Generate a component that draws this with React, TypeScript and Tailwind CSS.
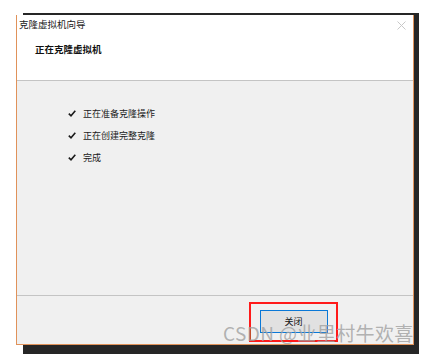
import React from 'react'

const steps = ['正在准备克隆操作', '正在创建完整克隆', '完成']

function Check() {
  return (
    <svg width="8" height="7" viewBox="0 0 8 7" className="shrink-0">
      <path d="M0.8 3.6 L3 5.8 L7.3 0.8" fill="none" stroke="#1a1a1a" strokeWidth="1.6" />
    </svg>
  )
}

export default function App() {
  const font = { fontFamily: '"Noto Sans CJK SC", "Noto Sans", sans-serif' }
  return (
    <div className="relative w-[431px] h-[354px] bg-white overflow-hidden" style={font}>
      {/* dark window shadow behind the dialog */}
      <div className="absolute left-[23px] top-[13px] w-[396px] h-[341px] bg-[#262626]" />

      <div className="relative pl-[16px] pt-[15px]">
        <div className="w-[398px] h-[330px] border-x border-b border-[#e0925a] bg-[#f0f0f0] flex flex-col">
          {/* header */}
          <div className="h-[66px] bg-white border-b border-[#c4c4c4] flex flex-col">
            <div className="flex items-center justify-between h-[20px] pl-[2px] pr-[7px]">
              <span className="text-[9.5px] leading-none text-[#222]">克隆虚拟机向导</span>
              <svg width="9" height="9" viewBox="0 0 9 9">
                <path d="M0.5 0.5 L8.5 8.5 M8.5 0.5 L0.5 8.5" stroke="#c8c8c8" strokeWidth="1" />
              </svg>
            </div>
            <div className="pl-[18px] pt-[10px] text-[9.5px] font-bold leading-none text-[#111]">正在克隆虚拟机</div>
          </div>

          {/* body */}
          <div className="flex-1 border-b border-[#c4c4c4] pl-[51px] pt-[27px] flex flex-col gap-[12px]">
            {steps.map(s => (
              <div key={s} className="flex items-center gap-[7px] h-[10px]">
                <Check />
                <span className="text-[9px] leading-none text-[#1a1a1a]">{s}</span>
              </div>
            ))}
          </div>

          {/* footer */}
          <div className="h-[48px] flex justify-start pl-[232px] pt-[6px]">
            <div className="w-[89px] h-[40px] border-2 border-[#ff1a1a] flex items-start justify-center pt-[6px]">
              <button className="w-[68px] h-[23px] bg-[#e1e1e1] border border-[#0a78d7] text-[9px] leading-none text-[#111] flex items-center justify-center">
                关闭
              </button>
            </div>
          </div>
        </div>
      </div>

      {/* watermark */}
      <div className="absolute left-[223px] top-[323px] text-[19px] leading-none text-[#a0a0a0]/80 whitespace-nowrap tracking-[0.4px]">
        CSDN @业里村牛欢喜
      </div>
    </div>
  )
}
